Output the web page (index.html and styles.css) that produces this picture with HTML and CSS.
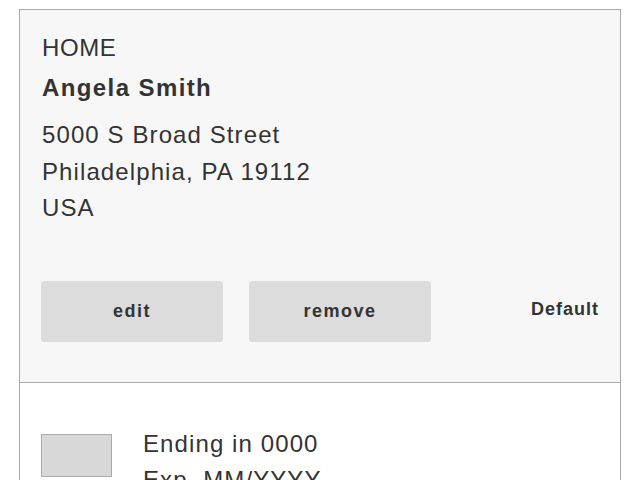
FILE: index.html
```html
<!DOCTYPE html>
<html>
<head>
<meta charset="utf-8">
<link rel="stylesheet" href="styles.css">
</head>
<body>
<div class="panel">
  <section class="address">
    <div class="text">
      <div class="label">HOME</div>
      <div class="name">Angela Smith</div>
      <div class="line">5000 S Broad Street</div>
      <div class="line">Philadelphia, PA 19112</div>
      <div class="line">USA</div>
    </div>
    <div class="actions">
      <button class="btn">edit</button>
      <button class="btn">remove</button>
      <span class="default">Default</span>
    </div>
  </section>
  <section class="card">
    <div class="card-thumb"></div>
    <div class="card-info">
      <div class="line">Ending in 0000</div>
      <div class="line">Exp. MM/YYYY</div>
    </div>
  </section>
</div>
</body>
</html>
```
FILE: styles.css
```css
html, body {
  margin: 0;
  padding: 0;
  background: #fff;
}
body {
  font-family: "Liberation Sans", Arial, sans-serif;
  color: #333;
  overflow: hidden;
}
.panel {
  margin: 9px 19px 0 19px;
  border: 1px solid #aaa;
  border-bottom: none;
}
.address {
  background: #f7f7f7;
  padding: 20px 21px 40px 21px;
  border-bottom: 1px solid #aaa;
}
.text {
  padding-left: 1px;
}
.label, .name, .line {
  font-size: 24px;
  line-height: 36.5px;
  letter-spacing: 1.1px;
}
.label {
  letter-spacing: 0.6px;
  margin-bottom: 3.5px;
}
.name {
  font-weight: bold;
  letter-spacing: 1.4px;
  margin-bottom: 10.5px;
}
.actions {
  display: flex;
  align-items: center;
  gap: 26px;
  margin-top: 54px;
}
.btn {
  width: 182px;
  height: 61px;
  border: none;
  border-radius: 3px;
  background: #dcdcdc;
  color: #333;
  font-family: "Liberation Sans", Arial, sans-serif;
  font-size: 18px;
  font-weight: bold;
  letter-spacing: 1.5px;
  padding: 0;
}
.default {
  margin-left: auto;
  margin-bottom: 4px;
  font-size: 18px;
  font-weight: bold;
  letter-spacing: 1px;
}
.card {
  display: flex;
  align-items: flex-start;
  gap: 31px;
  padding: 43px 21px 0 21px;
}
.card-thumb {
  width: 69px;
  height: 41px;
  margin-top: 8px;
  background: #d8d8d8;
  border: 1px solid #aaa;
}
```
